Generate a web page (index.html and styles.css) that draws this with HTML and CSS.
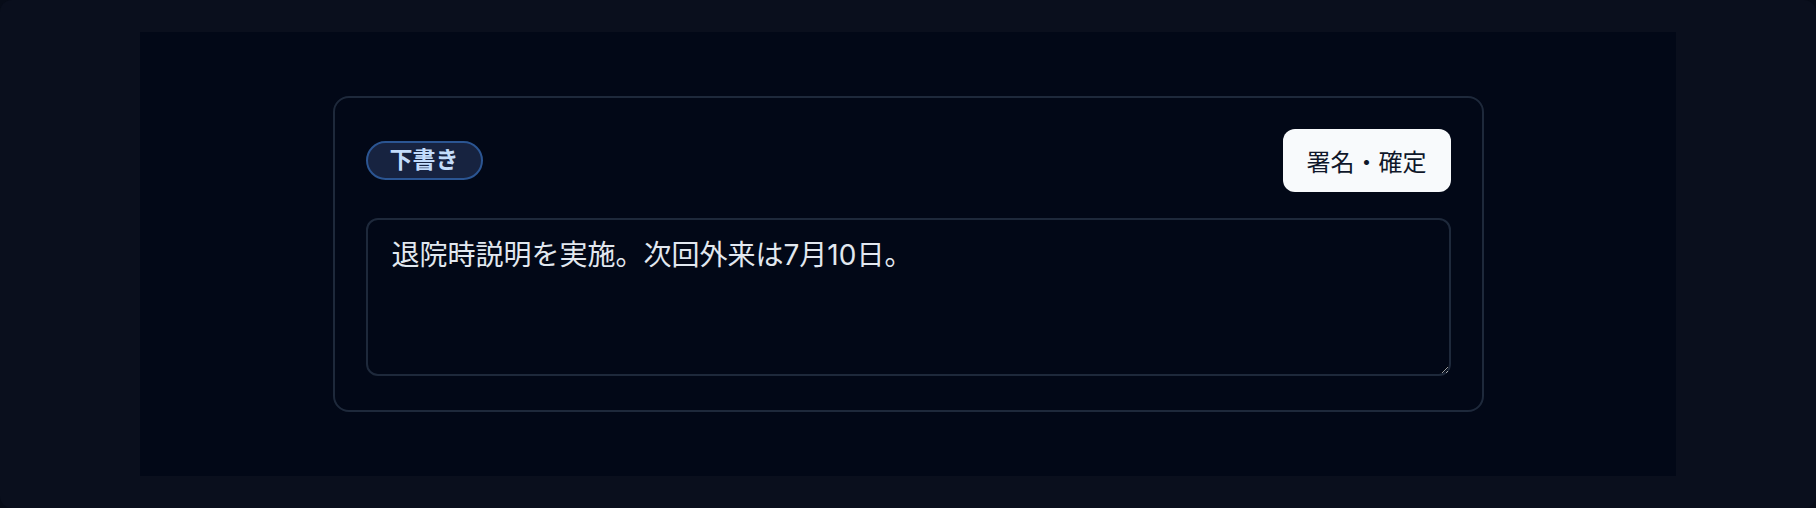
FILE: index.html
```html
<!DOCTYPE html>
<html lang="ja">
<head>
<meta charset="utf-8">
<title>下書き</title>
<link rel="stylesheet" href="styles.css">
</head>
<body>
<div class="frame">
  <main class="panel">
    <section class="card">
      <div class="card-head">
        <span class="badge">下書き</span>
        <button class="sign-btn" type="button">署名・確定</button>
      </div>
      <textarea class="note" rows="3">退院時説明を実施。次回外来は7月10日。</textarea>
    </section>
  </main>
</div>
</body>
</html>
```
FILE: styles.css
```css
html, body {
  margin: 0;
  padding: 0;
  background: #070c18;
}
body {
  font-family: "Inter", "Noto Sans CJK JP", sans-serif;
  width: 1816px;
  height: 508px;
  overflow: hidden;
}
.frame {
  box-sizing: border-box;
  width: 1816px;
  height: 508px;
  padding: 32px 140px;
  background: #0a0f1d;
  border-radius: 12px;
}
.panel {
  box-sizing: border-box;
  height: 444px;
  background: #020817;
  padding: 64px 0;
  display: flex;
  justify-content: center;
}
.card {
  box-sizing: border-box;
  width: 1151px;
  height: 316px;
  border: 2px solid #1e293b;
  border-radius: 16px;
  padding: 31px 31px 32px;
  display: flex;
  flex-direction: column;
  gap: 26px;
}
.card-head {
  display: flex;
  align-items: center;
  justify-content: space-between;
}
.badge {
  box-sizing: border-box;
  height: 39px;
  padding: 0 22px;
  display: inline-flex;
  align-items: center;
  border: 2px solid #2b5592;
  border-radius: 999px;
  background: #172340;
  color: #c3dcfb;
  font-family: "Inter", "Noto Sans CJK JP", sans-serif;
  font-size: 23px;
  font-weight: 700;
  line-height: 1;
}
.sign-btn {
  box-sizing: border-box;
  height: 63px;
  width: 168px;
  padding: 0;
  border: none;
  border-radius: 12px;
  background: #f8fafc;
  color: #0f172a;
  font-family: "Inter", "Noto Sans CJK JP", sans-serif;
  font-size: 24px;
  font-weight: 400;
}
.note {
  box-sizing: border-box;
  display: block;
  width: 100%;
  height: 158px;
  margin: 0;
  padding: 14px 24px;
  border: 2px solid #1e293b;
  border-radius: 12px;
  background: #020817;
  color: #e2e8f0;
  font-family: "Inter", "Noto Sans CJK JP", sans-serif;
  font-size: 28px;
  font-weight: 400;
  line-height: 42px;
  color-scheme: dark;
  resize: vertical;
  outline: none;
}
```
